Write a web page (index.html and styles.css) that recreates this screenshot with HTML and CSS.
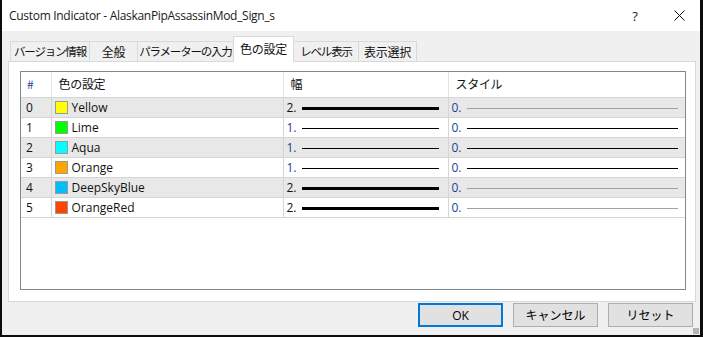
FILE: index.html
```html
<!DOCTYPE html>
<html lang="ja">
<head>
  <meta charset="UTF-8" />
  <title>Custom Indicator</title>
  <link rel="stylesheet" href="styles.css">
</head>
<body>
  <div class="window">
    <div class="titlebar">
      <span class="title">Custom Indicator - AlaskanPipAssassinMod_Sign_s</span>
      <span class="help">?</span>
      <span class="close">
        <svg width="11" height="11" viewBox="0 0 11 11"><path d="M0.5 0.5 L10.5 10.5 M10.5 0.5 L0.5 10.5" stroke="#111" stroke-width="1" fill="none"/></svg>
      </span>
    </div>
    <div class="content">
      <div class="tabs">
        <div class="tab w1 kana">バージョン情報</div>
        <div class="tab w2">全般</div>
        <div class="tab w3 kana">パラメーターの入力</div>
        <div class="tab w4 active">色の設定</div>
        <div class="tab w5 kana">レベル表示</div>
        <div class="tab w6">表示選択</div>
      </div>
      <div class="panel">
        <div class="listview">
          <table>
            <colgroup>
              <col class="col-num">
              <col class="col-color">
              <col class="col-width">
              <col class="col-style">
            </colgroup>
            <thead>
              <tr>
                <th class="c-num">#</th>
                <th>色の設定</th>
                <th>幅</th>
                <th class="c-style">スタイル</th>
              </tr>
            </thead>
            <tbody>
              <tr class="alt">
                <td class="c-num">0</td>
                <td class="c-color"><span class="swatch" style="background:#ffff00"></span>Yellow</td>
                <td class="c-width"><span class="val">2.</span><span class="line thick"></span></td>
                <td class="c-style"><span class="val blue">0.</span><span class="line wide faint"></span></td>
              </tr>
              <tr>
                <td class="c-num">1</td>
                <td class="c-color"><span class="swatch" style="background:#00ff00"></span>Lime</td>
                <td class="c-width"><span class="val blue">1.</span><span class="line"></span></td>
                <td class="c-style"><span class="val blue">0.</span><span class="line wide"></span></td>
              </tr>
              <tr class="alt">
                <td class="c-num">2</td>
                <td class="c-color"><span class="swatch" style="background:#00ffff"></span>Aqua</td>
                <td class="c-width"><span class="val blue">1.</span><span class="line"></span></td>
                <td class="c-style"><span class="val blue">0.</span><span class="line wide"></span></td>
              </tr>
              <tr>
                <td class="c-num">3</td>
                <td class="c-color"><span class="swatch" style="background:#ffa500"></span>Orange</td>
                <td class="c-width"><span class="val blue">1.</span><span class="line"></span></td>
                <td class="c-style"><span class="val blue">0.</span><span class="line wide"></span></td>
              </tr>
              <tr class="alt">
                <td class="c-num">4</td>
                <td class="c-color"><span class="swatch" style="background:#00bfff"></span>DeepSkyBlue</td>
                <td class="c-width"><span class="val">2.</span><span class="line thick"></span></td>
                <td class="c-style"><span class="val blue">0.</span><span class="line wide faint"></span></td>
              </tr>
              <tr>
                <td class="c-num">5</td>
                <td class="c-color"><span class="swatch" style="background:#ff4500"></span>OrangeRed</td>
                <td class="c-width"><span class="val">2.</span><span class="line thick"></span></td>
                <td class="c-style"><span class="val blue">0.</span><span class="line wide faint"></span></td>
              </tr>
            </tbody>
          </table>
        </div>
      </div>
      <div class="buttons">
        <button class="btn default">OK</button>
        <button class="btn">キャンセル</button>
        <button class="btn">リセット</button>
      </div>
    </div>
    <div class="grip"></div>
  </div>
</body>
</html>
```

FILE: styles.css
```css
body { margin: 0; padding: 0; background: #0d0d0d; font-family: "Open Sans", "Noto Sans CJK JP", sans-serif; font-size: 12px; color: #000; }
.window { position: relative; margin-left: 2px; width: 698px; height: 335px; background: #f0f0f0; }

.titlebar { height: 31px; background: #fff; display: flex; align-items: center; padding-left: 7px; }
.title { flex: 1; font-size: 12px; letter-spacing: -0.3px; color: #1a1a1a; white-space: nowrap; }
.help { width: 46px; text-align: center; font-size: 13px; color: #222; }
.close { width: 42px; height: 31px; display: flex; align-items: center; justify-content: center; }

.content { padding: 6px 4px 0 6px; }

.tabs { display: flex; align-items: flex-end; height: 24px; padding-left: 2px; position: relative; z-index: 1; }
.tab { height: 19px; line-height: 19px; border: 1px solid #d9d9d9; border-bottom: none; border-right: none; background: #f0f0f0; text-align: center; white-space: nowrap; font-family: "Noto Sans CJK JP", sans-serif; font-size: 12px; letter-spacing: -0.3px; color: #111; }
.tab.kana { font-size: 11.5px; letter-spacing: -1.2px; }
.tab.w6 { border-right: 1px solid #d9d9d9; }
.tab.active { height: 25px; line-height: 23px; background: #fff; border-right: 1px solid #d9d9d9; margin-bottom: -1px; }
.tab.active + .tab { border-left: none; }
.w1 { width: 78px; }
.w2 { width: 47px; }
.w3 { width: 95px; }
.w4 { width: 59px; }
.w5 { width: 64px; }
.w6 { width: 57px; }

.panel { height: 230px; background: #fff; border: 1px solid #d9d9d9; padding: 9px 0 0 11px; }
.listview { width: 664px; height: 217px; border: 1px solid #828790; background: #fff; }

table { border-collapse: collapse; width: 664px; table-layout: fixed; }
.col-num { width: 30px; }
.col-color { width: 232px; }
.col-width { width: 165px; }
.col-style { width: 237px; }

th, td { box-sizing: border-box; }
th { height: 25px; font-weight: normal; text-align: left; padding: 0 0 1px 7px; border-right: 1px solid #e5e5e5; border-bottom: 1px solid #d5d5d5; font-family: "Noto Sans CJK JP", sans-serif; font-size: 12px; letter-spacing: -0.3px; color: #111; }
th.c-num { padding-left: 6px; color: #1c3f94; }
th.c-style { border-right: none; }
td { height: 20px; padding: 0 0 0 3px; border-bottom: 1px solid #d5d5d5; border-right: 1px solid #d5d5d5; white-space: nowrap; overflow: hidden; color: #111; }
td.c-style { border-right: none; }
td.c-num { padding-left: 5px; }
tr.alt td { background: #e8e8e8; }

.swatch { display: inline-block; width: 11px; height: 11px; border: 1px solid #9a9a9a; vertical-align: -2px; margin-right: 4px; }
.val { display: inline-block; width: 15px; }
.val.blue { color: #1c3f94; }
.line { display: inline-block; width: 137px; height: 1px; background: #000; vertical-align: 3px; }
.line.thick { height: 3px; vertical-align: 2px; }
.line.wide { width: 211px; }
.line.faint { background: #a0a0a0; }

.buttons { display: flex; justify-content: flex-end; gap: 10px; padding: 1px 3px 0 0; }
.btn { width: 85px; height: 24px; background: #e1e1e1; border: 1px solid #adadad; font-family: "Open Sans", "Noto Sans CJK JP", sans-serif; font-size: 12px; color: #000; padding: 0; }
.btn.default { border: 2px solid #0078d7; }
.grip { position: absolute; right: 1px; bottom: 1px; width: 6px; height: 6px; background: radial-gradient(circle, #b5b5b5 0.8px, transparent 1px) 0 0 / 2px 2px; }
```
